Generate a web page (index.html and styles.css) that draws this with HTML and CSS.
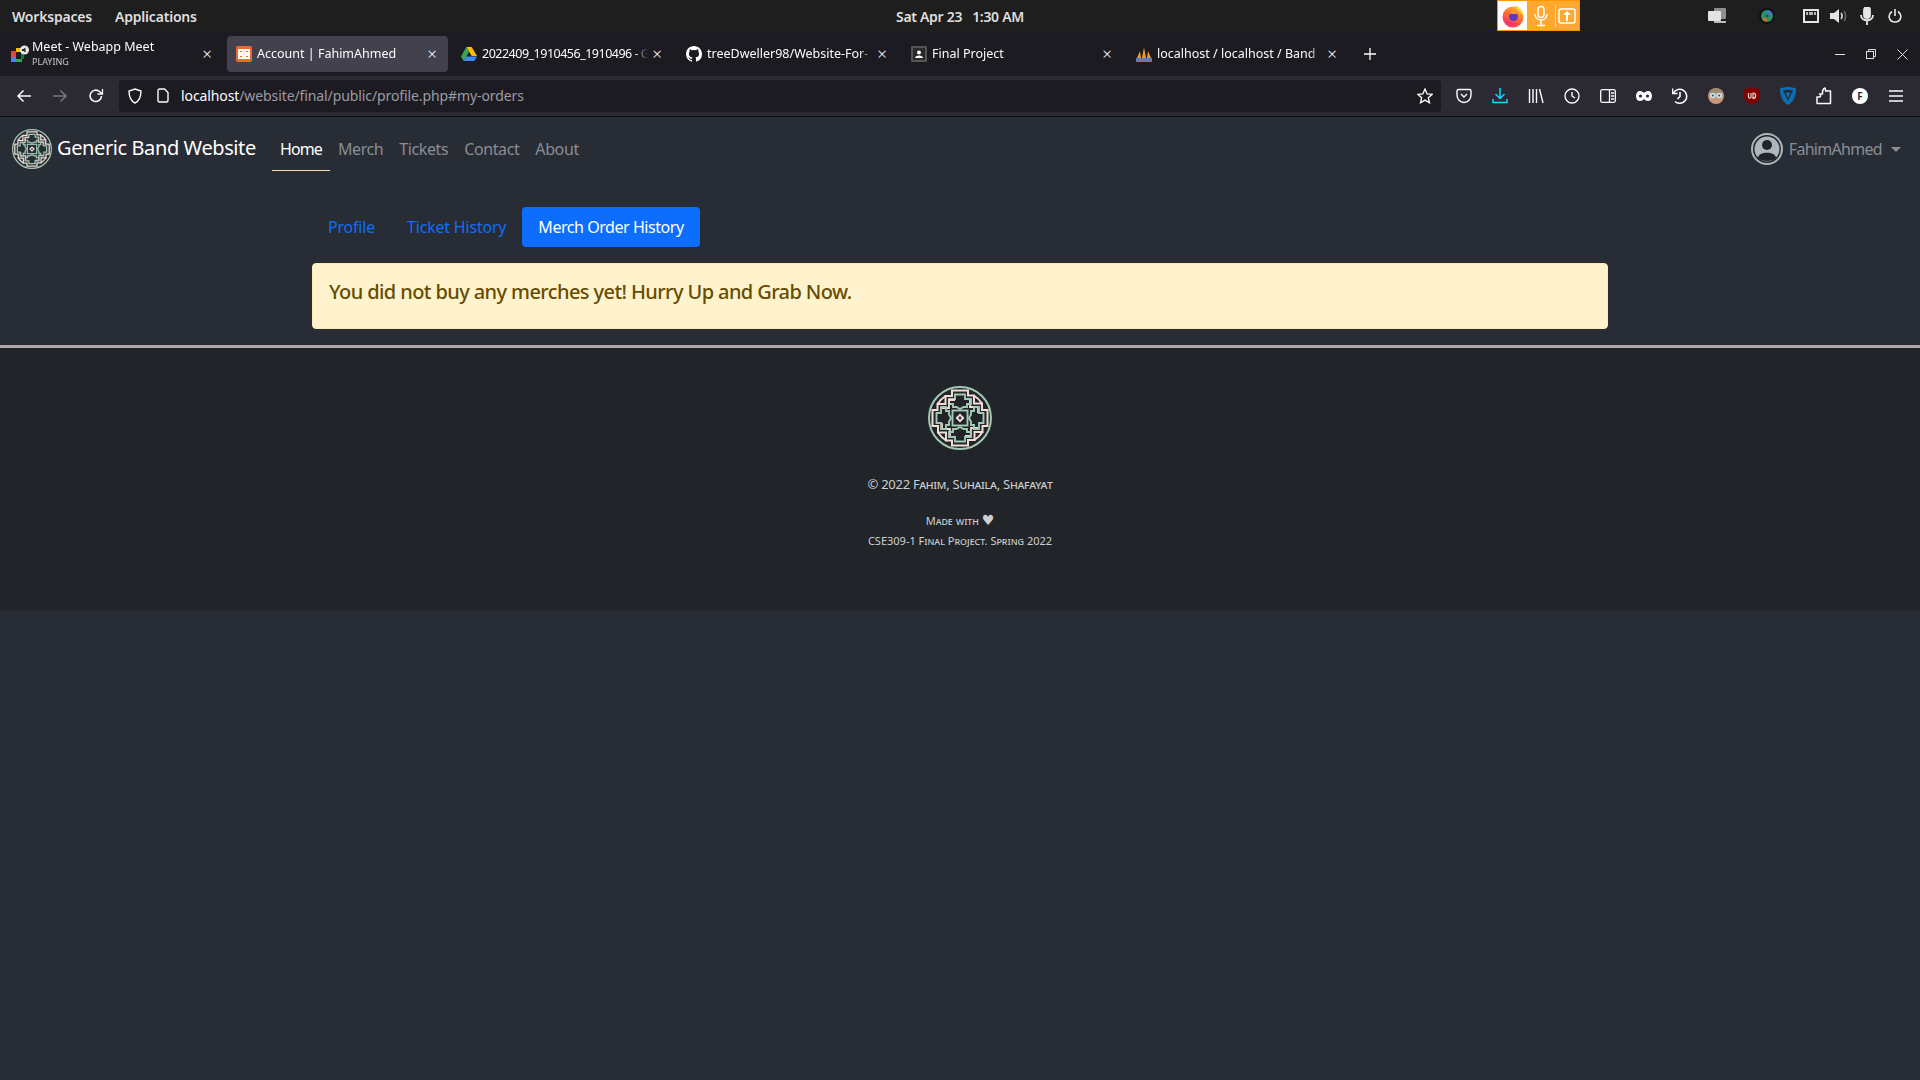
FILE: index.html
```html
<!DOCTYPE html>
<html lang="en">
<head>
    <meta charset="UTF-8">
    <title>Account | FahimAhmed</title>
    <link rel="stylesheet" href="styles.css">
</head>
<body>

    <svg class="defs" width="0" height="0">
        <defs>
            <linearGradient id="foxgrad" x1="0.800" y1="0" x2="0.300" y2="1">
                <stop offset="0" stop-color="#ffc22e"/>
                <stop offset="0.500" stop-color="#ff6a2e"/>
                <stop offset="1" stop-color="#f0307a"/>
            </linearGradient>
        </defs>
        <symbol id="bandlogo" viewBox="0 0 64 64">
            <g id="quarter" fill="none">
                <path d="M32 4.500H40V9.500H46V17.500H54V24H59.500V32" stroke="#f3dcd8" stroke-width="2"/>
                <path d="M46 9.500A26.500 26.500 0 0 1 54 17.500" stroke="#f3dcd8" stroke-width="2"/>
                <path d="M42 14V21H50V27" stroke="#f3dcd8" stroke-width="1.800"/>
                <path d="M25 21V18H21V13H27V8.500H37V13H43V18H39V21H35.500L32 23L28.500 21Z" stroke="#a3c9b4" stroke-width="1.900"/>
            </g>
            <use href="#quarter" transform="rotate(90 32 32)"/>
            <use href="#quarter" transform="rotate(180 32 32)"/>
            <use href="#quarter" transform="rotate(270 32 32)"/>
            <circle cx="32" cy="32" r="31" fill="none" stroke="#a3c9b4" stroke-width="2"/>
            <rect x="24.500" y="24.500" width="15" height="15" fill="none" stroke="#a3c9b4" stroke-width="1.900"/>
            <path d="M32 27.500L36.500 32L32 36.500L27.500 32Z" fill="#f3dcd8"/>
            <circle cx="32" cy="32" r="1.400" fill="#212529"/>
        </symbol>
    </svg>

    <!-- desktop panel -->
    <div class="panel">
        <div class="panel-left">
            <span>Workspaces</span>
            <span>Applications</span>
        </div>
        <div class="clock">Sat Apr 23 &nbsp; 1:30 AM</div>
        <div class="tray">
            <div class="tray-fox">
                <svg width="24" height="24" viewBox="0 0 24 24"><circle cx="12" cy="13" r="10.500" fill="url(#foxgrad)"/><path d="M14 1C18 3 23 7 22.500 13C22 10 20 9 18 8C17 5 14 3 14 1Z" fill="#ffd93b"/><circle cx="12.500" cy="12.500" r="4.500" fill="#5b3ac9"/><path d="M8 9.500C10 7 15 7 16.500 10L12 10Z" fill="#ff9a2e"/><path d="M4 14C5 20 12 22 17 19C12 20 7 18 4 14Z" fill="#f0307a"/></svg>
            </div>
            <svg class="tray-ico" width="18" height="22" viewBox="0 0 18 22" fill="none" stroke="#fff" stroke-width="1.500"><rect x="6" y="1.500" width="6" height="11" rx="3"/><path d="M3 9C3 17 15 17 15 9M9 15V20M5 20.500H13"/></svg>
            <i class="tray-sep"></i>
            <svg class="tray-ico up" width="18" height="18" viewBox="0 0 18 18" fill="none" stroke="#fff" stroke-width="1.500"><rect x="1" y="2" width="16" height="14" rx="2"/><path d="M9 14V6" stroke-width="2"/><path d="M5 8L9 4L13 8Z" fill="#fff" stroke="none"/></svg>
        </div>
        <div class="status">
            <svg class="st1" width="18" height="16" viewBox="0 0 18 16"><rect x="6" y="0" width="12" height="11" rx="1" fill="#8f8f8f"/><rect x="0" y="3" width="13" height="10" rx="1" fill="#e4e4e4"/><rect x="6" y="13" width="12" height="2" fill="#bbb"/></svg>
            <svg class="st2" width="16" height="18" viewBox="0 0 16 18"><circle cx="8" cy="9" r="8" fill="#111"/><circle cx="8" cy="9" r="6" fill="#2a8f6e"/><path d="M8 3A6 6 0 0 1 13.500 7L8 9Z" fill="#4a6fc0"/><path d="M3 12A6 6 0 0 0 8 15L8 9Z" fill="#a8782c"/><circle cx="8" cy="9" r="1.500" fill="#1b5c52"/></svg>
            <svg class="st3" width="16" height="16" viewBox="0 0 16 16" fill="none" stroke="#e6e6e6" stroke-width="2"><path d="M1 2H15V14H1Z"/><path d="M4 4V7M7 4V7M9 4V7M12 4V7" stroke-width="1.500"/></svg>
            <svg class="st4" width="18" height="16" viewBox="0 0 18 16"><path d="M0 5H4L9 1V15L4 11H0Z" fill="#e6e6e6"/><path d="M11 5C12.500 7 12.500 9 11 11" fill="none" stroke="#e6e6e6" stroke-width="1.500"/><path d="M14 3C16 6 16 10 14 13" fill="none" stroke="#666" stroke-width="1.500"/></svg>
            <svg class="st5" width="14" height="18" viewBox="0 0 14 18" fill="none" stroke="#e6e6e6" stroke-width="1.800"><rect x="4" y="0" width="6" height="11" rx="3" fill="#e6e6e6"/><path d="M1 8C1 15 13 15 13 8M7 13V18"/></svg>
            <svg class="st6" width="14" height="14" viewBox="0 0 14 14" fill="none" stroke="#e6e6e6" stroke-width="1.600"><path d="M7 0V7M4 2.500C-1 6 1 13 7 13C13 13 15 6 10 2.500"/></svg>
        </div>
    </div>

    <!-- browser tabs -->
    <div class="tabbar">
        <div class="tab">
            <svg class="favicon first" width="18" height="18" viewBox="0 0 18 18"><rect x="0" y="6" width="5" height="6" fill="#ea4335"/><rect x="0" y="12" width="5" height="5" fill="#4285f4"/><rect x="5" y="3" width="5" height="4" fill="#fbbc04"/><rect x="5" y="14" width="6" height="3" fill="#34a853"/><rect x="10" y="6" width="3" height="8" fill="#00832d"/><circle cx="13.500" cy="5" r="4.500" fill="#e8e8e8"/><path d="M11 4H12.500L14.500 2.500V7.500L12.500 6H11Z" fill="#222"/></svg>
            <div class="tab-label">
                <span class="tab-title">Meet - Webapp Meet</span>
                <span class="tab-sub">PLAYING</span>
            </div>
            <span class="tab-x">×</span>
        </div>
        <div class="tab active">
            <svg class="favicon" width="16" height="16" viewBox="0 0 16 16"><rect width="16" height="16" rx="2" fill="#ea6b2d"/><path d="M3 4H7V7H3ZM9 4H13V7H9ZM3 9H7V12H3ZM9 9H13V12H9Z" fill="none" stroke="#fff" stroke-width="1.800"/></svg>
            <span class="tab-title">Account | FahimAhmed</span>
            <span class="tab-x">×</span>
        </div>
        <div class="tab">
            <svg class="favicon" width="16" height="14" viewBox="0 0 16 14"><path d="M5.300 0H10.700L16 9H10.700Z" fill="#fbbc04"/><path d="M5.300 0L0 9.500L2.700 14L8 5Z" fill="#34a853"/><path d="M5 9.500H16L13.300 14H2.700Z" fill="#4285f4"/></svg>
            <span class="tab-title tight">2022409_1910456_1910496 - G</span>
            <span class="tab-x">×</span>
        </div>
        <div class="tab">
            <svg class="favicon" width="16" height="16" viewBox="0 0 16 16"><path fill="#fff" d="M8 0C3.580 0 0 3.580 0 8c0 3.540 2.290 6.530 5.470 7.590.4.070.55-.17.55-.38v-1.340c-2.230.48-2.700-1.080-2.700-1.080-.36-.92-.89-1.170-.89-1.170-.73-.5.050-.49.050-.49.800.06 1.220.83 1.220.83.720 1.220 1.870.87 2.330.66.070-.52.280-.87.510-1.070-1.780-.2-3.640-.89-3.640-3.950 0-.87.310-1.590.820-2.150-.080-.2-.360-1.020.080-2.120 0 0 .67-.21 2.200.82a7.600 7.600 0 0 1 4 0c1.530-1.040 2.200-.82 2.200-.82.440 1.100.160 1.920.080 2.120.510.560.820 1.270.820 2.150 0 3.070-1.870 3.750-3.650 3.950.290.250.540.730.540 1.480v2.200c0 .21.150.46.550.38A8 8 0 0 0 16 8c0-4.420-3.580-8-8-8z"/></svg>
            <span class="tab-title">treeDweller98/Website-For-</span>
            <span class="tab-x">×</span>
        </div>
        <div class="tab">
            <svg class="favicon" width="16" height="16" viewBox="0 0 16 16"><rect width="16" height="16" rx="1" fill="#555"/><rect x="2" y="2" width="12" height="12" fill="#2a2a2a"/><circle cx="8" cy="6.500" r="2" fill="#fff"/><path d="M4 12C4 8.500 12 8.500 12 12Z" fill="#fff"/></svg>
            <span class="tab-title">Final Project</span>
            <span class="tab-x">×</span>
        </div>
        <div class="tab">
            <svg class="favicon" width="16" height="16" viewBox="0 0 16 16"><path d="M1 12L4 5L5 12ZM6 12L8 1L10 12ZM11 12L12 5L15 12Z" fill="#f39a2c"/><rect x="0" y="12" width="16" height="4" fill="#6c78af"/></svg>
            <span class="tab-title">localhost / localhost / Band</span>
            <span class="tab-x">×</span>
        </div>
        <svg class="newtab" width="12" height="12" viewBox="0 0 12 12" stroke="#fbfbfe" stroke-width="1.300"><path d="M6 0V12M0 6H12"/></svg>
        <div class="winctl">
            <svg width="10" height="10" viewBox="0 0 10 10" stroke="#ddd" fill="none"><path d="M0 5.500H10"/></svg>
            <svg width="10" height="10" viewBox="0 0 10 10" stroke="#ddd" fill="none"><rect x="0.500" y="2.500" width="7" height="7"/><path d="M2.500 2.500V0.500H9.500V7.500H7.500"/></svg>
            <svg width="11" height="11" viewBox="0 0 11 11" stroke="#ddd" fill="none"><path d="M0.500 0.500L10.500 10.500M10.500 0.500L0.500 10.500"/></svg>
        </div>
    </div>

    <!-- browser toolbar -->
    <div class="toolbar">
        <div class="nav-btns">
            <svg width="16" height="16" viewBox="0 0 16 16" fill="none" stroke="#fbfbfe" stroke-width="1.500"><path d="M15 8H2M7.500 2.500L2 8L7.500 13.500"/></svg>
            <svg width="16" height="16" viewBox="0 0 16 16" fill="none" stroke="#77767c" stroke-width="1.500"><path d="M1 8H14M8.500 2.500L14 8L8.500 13.500"/></svg>
            <svg width="16" height="16" viewBox="0 0 16 16" fill="none" stroke="#fbfbfe" stroke-width="1.500"><path d="M13.500 8A5.700 5.700 0 1 1 11.500 3.500L14 5.500"/><path d="M14.500 1V6H9.500" stroke-width="1.300"/></svg>
        </div>
        <div class="urlbar">
            <svg width="14" height="16" viewBox="0 0 14 16" fill="none" stroke="#fbfbfe" stroke-width="1.400"><path d="M7 1L13 3C13 9 11 13 7 15C3 13 1 9 1 3Z"/></svg>
            <svg class="page-ico" width="12" height="15" viewBox="0 0 12 15" fill="none" stroke="#fbfbfe" stroke-width="1.400"><path d="M1 2.500C1 1.500 1.500 1 2.500 1H7.500L11 4.500V12.500C11 13.500 10.500 14 9.500 14H2.500C1.500 14 1 13.500 1 12.500Z"/></svg>
            <span class="url"><b>localhost</b>/website/final/public/profile.php#my-orders</span>
            <svg class="star" width="16" height="16" viewBox="0 0 16 16" fill="none" stroke="#fbfbfe" stroke-width="1.300"><path d="M8 1L10.100 5.800L15.200 6.300L11.300 9.700L12.500 14.800L8 12.100L3.500 14.800L4.700 9.700L0.800 6.300L5.900 5.800Z"/></svg>
        </div>
        <div class="addons">
            <span class="addon"><svg width="16" height="16" viewBox="0 0 16 16" fill="none" stroke="#fbfbfe" stroke-width="1.400"><path d="M1 3C1 2 1.500 1.500 2.500 1.500H13.500C14.500 1.500 15 2 15 3V7C15 11 12 14.500 8 14.500C4 14.500 1 11 1 7Z"/><path d="M5 6L8 9L11 6"/></svg></span>
            <span class="addon"><svg width="16" height="16" viewBox="0 0 16 16" fill="none" stroke="#00ddff" stroke-width="1.500"><path d="M8 0V10M3.500 6L8 10.500L12.500 6M1 11V14.500H15V11"/></svg></span>
            <span class="addon"><svg width="16" height="16" viewBox="0 0 16 16" fill="none" stroke="#fbfbfe" stroke-width="1.400"><path d="M1.500 1V15M5 1V15M8.500 1V15M11.500 1L15 15"/></svg></span>
            <span class="addon"><svg width="16" height="16" viewBox="0 0 16 16" fill="none" stroke="#fbfbfe" stroke-width="1.400"><circle cx="8" cy="8" r="7"/><path d="M8 4V8L11 10"/></svg></span>
            <span class="addon"><svg width="16" height="14" viewBox="0 0 16 14" fill="none" stroke="#fbfbfe" stroke-width="1.300"><rect x="0.700" y="0.700" width="14.600" height="12.600" rx="1.500"/><path d="M9.500 1V13M11 4H14M11 7H14M11 10H14"/></svg></span>
            <span class="addon"><svg width="16" height="10" viewBox="0 0 16 10"><path d="M4 0C6 0 7 1 8 2C9 1 10 0 12 0C14.500 0 16 2 16 5C16 8 14.500 10 12 10C10 10 9 9 8 8C7 9 6 10 4 10C1.500 10 0 8 0 5C0 2 1.500 0 4 0Z" fill="#fbfbfe"/><circle cx="4.500" cy="5" r="1.600" fill="#2b2a33"/><circle cx="11.500" cy="5" r="1.600" fill="#2b2a33"/></svg></span>
            <span class="addon"><svg width="16" height="16" viewBox="0 0 16 16" fill="none" stroke="#fbfbfe" stroke-width="1.600"><path d="M1.500 5A7 7 0 1 1 3 13.500"/><path d="M0.500 0.500V5.500H5.500"/><path d="M8 4V8.500L5.500 11"/></svg></span>
            <span class="addon"><svg width="16" height="18" viewBox="0 0 16 18"><circle cx="8" cy="9" r="8" fill="#c89678"/><path d="M1 6C3 0 13 0 15 6Z" fill="#9a8a70"/><circle cx="4.800" cy="8.500" r="2.800" fill="#bfe4ee"/><circle cx="11.200" cy="8.500" r="2.800" fill="#bfe4ee"/><circle cx="4.800" cy="8.500" r="1" fill="#445"/><circle cx="11.200" cy="8.500" r="1" fill="#445"/></svg></span>
            <span class="addon"><svg width="16" height="18" viewBox="0 0 16 18"><path d="M8 0L16 2.500V9C16 13 12 16 8 18C4 16 0 13 0 9V2.500Z" fill="#800000"/><path d="M4.500 6V10C4.500 11.500 7 11.500 7 10V6M9 6V11.500C12.500 11.500 12.500 6 9 6Z" fill="none" stroke="#f0d0d0" stroke-width="1.200"/></svg></span>
            <span class="addon"><svg width="16" height="18" viewBox="0 0 16 18"><path d="M0 1.500C5 -0.500 11 -0.500 16 1.500C16 9 14 14 8 18C2 14 0 9 0 1.500Z" fill="#0a6fb5"/><path d="M3 3.500C6 2.500 10 2.500 13 3.500L8 14Z" fill="#2b2a33"/><path d="M5.500 5.500H10.500L8 11Z" fill="#0a6fb5"/></svg></span>
            <span class="addon"><svg width="16" height="18" viewBox="0 0 16 18" fill="none" stroke="#fbfbfe" stroke-width="1.500"><path d="M1 10H3.500C5 10 5 7 3.500 7H6.500V5C6.500 3.500 7 2 9 1C9.500 2 10 3 9.500 4H14.500V16.500H1Z" stroke-linejoin="round"/></svg></span>
            <span class="addon"><span class="acct-dot">F</span></span>
            <span class="addon"><svg width="16" height="12" viewBox="0 0 16 12" stroke="#fbfbfe" stroke-width="1.400"><path d="M1 1H15M1 6H15M1 11H15"/></svg></span>
        </div>
    </div>

    <!-- the page itself -->
    <nav class="navbar">
        <a class="brand">
            <svg class="logo-sm"><use href="#bandlogo"/></svg>
            <span>Generic Band Website</span>
        </a>
        <ul class="navlinks">
            <li class="current">Home</li>
            <li>Merch</li>
            <li>Tickets</li>
            <li>Contact</li>
            <li>About</li>
        </ul>
        <div class="user">
            <svg width="32" height="32" viewBox="0 0 32 32"><circle cx="16" cy="16" r="15" fill="#212529" stroke="#adb5bd" stroke-width="2"/><circle cx="16" cy="16" r="12.500" fill="#adb5bd"/><circle cx="16" cy="12" r="5" fill="#212529"/><path d="M7 25C7 18 25 18 25 25C22 29 10 29 7 25Z" fill="#212529"/></svg>
            <span>FahimAhmed</span>
            <i class="caret"></i>
        </div>
    </nav>

    <main class="container">
        <ul class="pills">
            <li>Profile</li>
            <li>Ticket History</li>
            <li class="on">Merch Order History</li>
        </ul>
        <div class="alert">You did not buy any merches yet! Hurry Up and Grab Now.</div>
    </main>

    <footer class="footer">
        <svg class="logo-lg"><use href="#bandlogo"/></svg>
        <p class="copy">© 2022 Fahim, Suhaila, Shafayat</p>
        <p class="small">Made with <span class="heart">♥</span></p>
        <p class="small">CSE309-1 Final Project. Spring 2022</p>
    </footer>

</body>
</html>
```

FILE: styles.css
```css
*{
    box-sizing: border-box;
}
body{
    margin: 0;
    height: 1080px;
    overflow: hidden;
    background-color: #282c35;
    font-family: 'Noto Sans', sans-serif;
}
.defs{
    position: absolute;
}
ul{
    margin: 0;
    padding: 0;
    list-style: none;
}

/* desktop panel */
.panel{
    height: 32px;
    background-color: #1f1e1e;
    color: #dedede;
    position: relative;
    display: flex;
    align-items: center;
    font-size: 14px;
    font-weight: 600;
    letter-spacing: -0.2px;
}
.panel-left{
    display: flex;
    gap: 23px;
    padding-left: 12px;
}
.clock{
    position: absolute;
    left: 895px;
    width: 130px;
    text-align: center;
    white-space: nowrap;
    letter-spacing: -0.3px;
}
.tray{
    position: absolute;
    left: 1497px;
    top: 0;
    width: 83px;
    height: 31px;
    background-color: #ffa830;
    border: 1px solid #ff9500;
    display: flex;
    align-items: center;
}
.tray-fox{
    width: 29px;
    height: 29px;
    background-color: #fff;
    display: flex;
    align-items: center;
    justify-content: center;
}
.tray-ico{
    margin-left: 5px;
}
.tray-ico.up{
    margin-left: 2px;
}
.tray-sep{
    width: 1px;
    height: 22px;
    margin-left: 5px;
    background-color: #ffd596;
}
.status svg{
    position: absolute;
    top: 8px;
}
.st1{ left: 1708px; }
.st2{ left: 1759px; top: 7px !important; }
.st3{ left: 1803px; }
.st4{ left: 1830px; }
.st5{ left: 1860px; top: 7px !important; }
.st6{ left: 1888px; top: 9px !important; }

/* tabs */
.tabbar{
    height: 44px;
    background-color: #1c1b22;
    display: flex;
    align-items: center;
    gap: 4px;
    padding-left: 2px;
    position: relative;
}
.tab{
    width: 221px;
    height: 36px;
    border-radius: 4px;
    display: flex;
    align-items: center;
    padding: 0 9px 0 9px;
    color: #fbfbfe;
    font-size: 12.500px;
}
.tab.active{
    background-color: #42414d;
}
.favicon{
    flex: none;
    margin-right: 5px;
}
.favicon.first{
    margin-right: 3px;
}
.tab-title{
    flex: 1;
    min-width: 0;
    white-space: nowrap;
    overflow: hidden;
    display: block;
    line-height: 18px;
    margin-top: -1px;
    -webkit-mask-image: linear-gradient(to left, transparent, #000 14px);
    mask-image: linear-gradient(to left, transparent, #000 14px);
}
.tab-title.tight{
    letter-spacing: -0.5px;
}
.tab-label{
    flex: 1;
    min-width: 0;
    display: flex;
    flex-direction: column;
    margin-top: -2px;
}
.tab-label .tab-title{
    flex: none;
    margin-top: -2px;
}
.tab-sub{
    font-size: 9px;
    line-height: 11px;
    opacity: 0.75;
}
.tab-x{
    flex: none;
    width: 14px;
    margin-left: 2px;
    text-align: center;
    font-size: 17px;
    line-height: 16px;
    font-weight: 300;
}
.newtab{
    margin-left: 12px;
}
.winctl{
    position: absolute;
    left: 1835px;
    top: 17px;
    display: flex;
    gap: 21px;
}

/* toolbar */
.toolbar{
    height: 41px;
    padding-bottom: 1px;
    background-color: #2b2a33;
    border-bottom: 1px solid #0c0c0d;
    display: flex;
    align-items: center;
}
.nav-btns{
    width: 119px;
    display: flex;
    gap: 20px;
    padding-left: 16px;
}
.urlbar{
    width: 1322px;
    height: 32px;
    background-color: #1c1b22;
    border-radius: 4px;
    display: flex;
    align-items: center;
    padding: 0 8px 0 9px;
    color: #9b9ba2;
    font-size: 14px;
}
.page-ico{
    margin-left: 15px;
}
.url{
    flex: 1;
    margin-left: 12px;
    letter-spacing: -0.1px;
}
.url b{
    color: #fbfbfe;
    font-weight: 400;
}
.addons{
    display: flex;
    margin-left: 5px;
}
.addon{
    width: 36px;
    height: 32px;
    display: flex;
    align-items: center;
    justify-content: center;
}
.acct-dot{
    width: 16px;
    height: 16px;
    border-radius: 50%;
    background-color: #fff;
    color: #2b2a33;
    font-size: 10px;
    font-weight: 700;
    line-height: 16px;
    text-align: center;
}

/* site navbar */
.navbar{
    height: 64px;
    padding: 0 12px;
    display: flex;
    align-items: center;
    position: relative;
}
.brand{
    display: flex;
    align-items: center;
    gap: 5px;
    width: 252px;
    color: #fff;
    font-size: 20px;
    letter-spacing: -0.4px;
    margin-top: -3px;
}
.logo-sm{
    width: 40px;
    height: 40px;
    margin-top: 3px;
}
.navlinks{
    display: flex;
    height: 100%;
    margin-left: 8px;
    color: #8a8d92;
    font-size: 16px;
    letter-spacing: -0.4px;
}
.navlinks li{
    padding: 0 8px;
    line-height: 65px;
    height: 54px;
}
.navlinks li.current{
    color: #fff;
    border-bottom: 1px solid #f5d9a8;
    letter-spacing: -0.9px;
}
.user{
    margin-left: auto;
    display: flex;
    align-items: center;
    gap: 6px;
    padding-right: 7px;
    color: #8a8d92;
    font-size: 16px;
    letter-spacing: -0.7px;
}
.caret{
    width: 0;
    height: 0;
    margin-left: 3px;
    border-top: 5px solid #8a8d92;
    border-left: 5px solid transparent;
    border-right: 5px solid transparent;
}

/* tabs + alert */
.container{
    width: 1296px;
    margin: 26px auto 0;
}
.pills{
    display: flex;
    gap: 0;
    font-size: 16px;
    letter-spacing: -0.2px;
    color: #0d6efd;
}
.pills li{
    height: 40px;
    line-height: 40px;
    padding: 0 16px;
    border-radius: 4px;
}
.pills li.on{
    background-color: #0d6efd;
    color: #fff;
    letter-spacing: -0.45px;
}
.alert{
    margin-top: 16px;
    height: 66px;
    padding: 16px 16px;
    background-color: #fff3cd;
    border: 1px solid #ffecb5;
    border-radius: 4px;
    color: #664d03;
    font-size: 20px;
    font-weight: 500;
    letter-spacing: -0.6px;
    line-height: 24px;
}

/* footer */
.footer{
    margin-top: 16px;
    height: 266px;
    border-top: 3px solid #b0a9a9;
    background-color: #212529;
    color: #cfcfcf;
    text-align: center;
    display: flex;
    flex-direction: column;
    align-items: center;
    padding-top: 38px;
    font-variant: small-caps;
}
.logo-lg{
    width: 64px;
    height: 64px;
    margin-bottom: 24px;
}
.footer p{
    margin: 0;
}
.copy{
    font-size: 13px;
    line-height: 20px;
    letter-spacing: -0.25px;
    margin-bottom: 17px !important;
}
.small{
    font-size: 11px;
    line-height: 20px;
}
.heart{
    font-family: 'DejaVu Sans', sans-serif;
    font-size: 14px;
    line-height: 14px;
}
```
